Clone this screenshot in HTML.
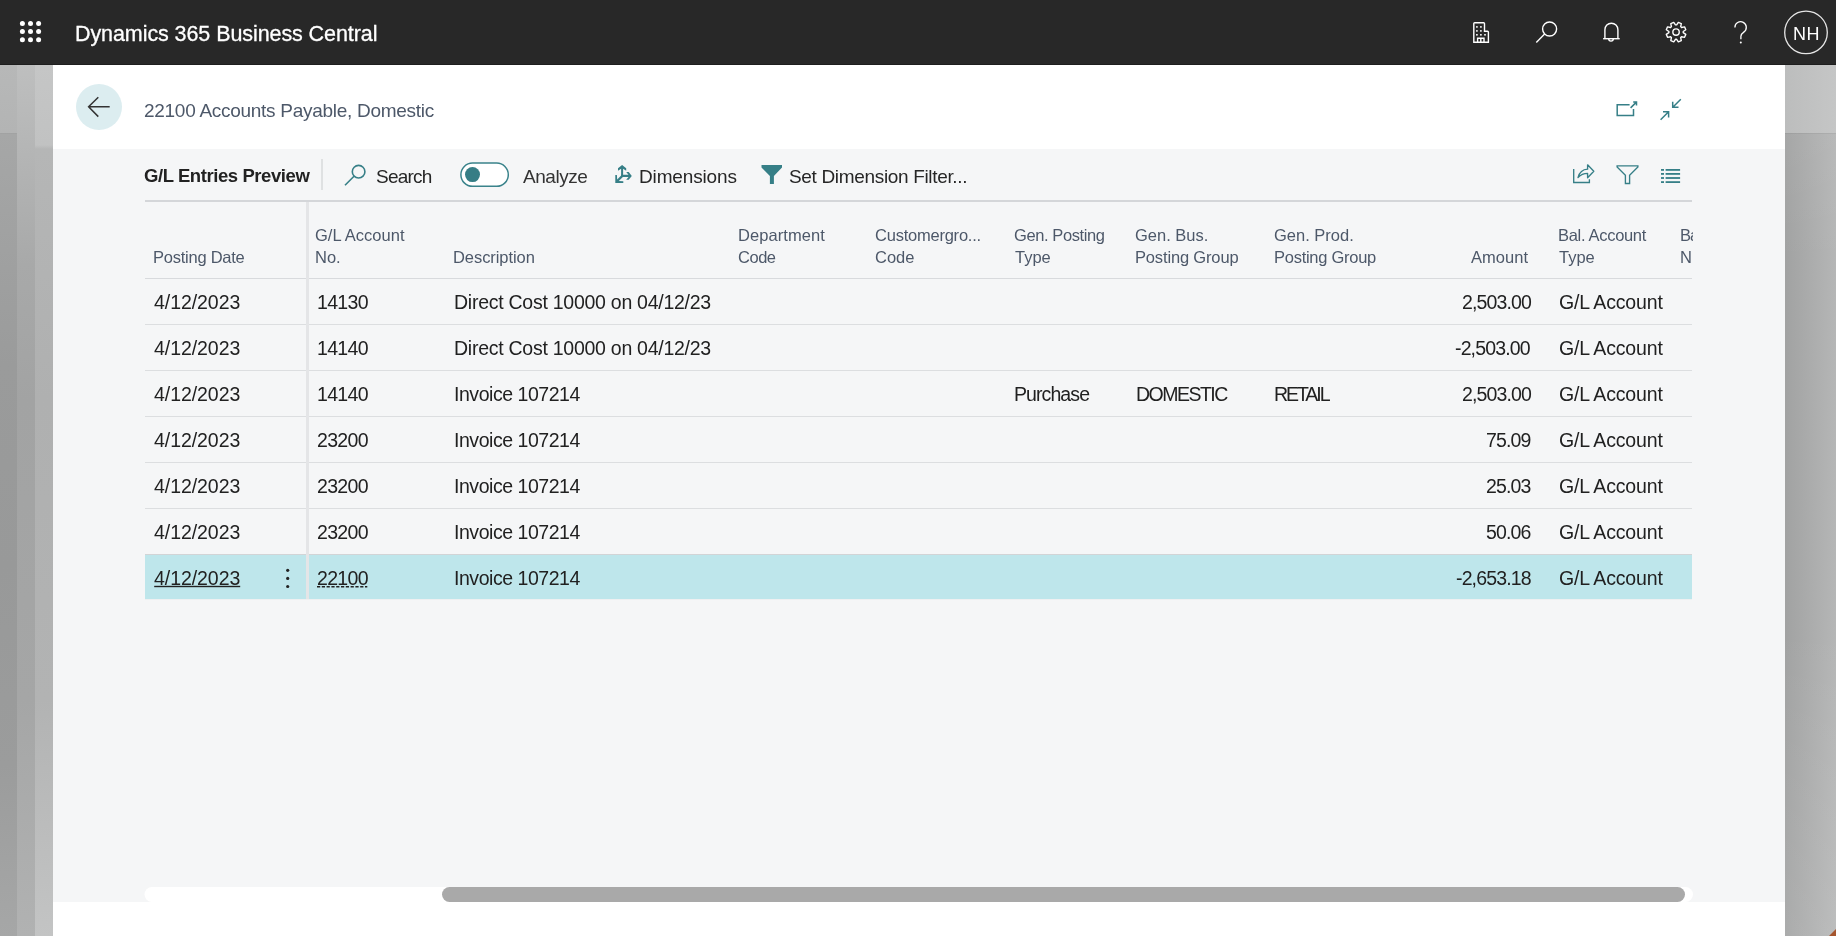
<!DOCTYPE html>
<html><head><meta charset="utf-8">
<style>
*{margin:0;padding:0;box-sizing:border-box}
html,body{width:1836px;height:936px;overflow:hidden}
body{position:relative;font-family:"Liberation Sans",sans-serif;background:#b5b6b6;-webkit-font-smoothing:antialiased}
.a{position:absolute;white-space:nowrap;line-height:1;will-change:transform}
.f{position:absolute}
#bgr{left:1785px;top:65px;width:51px;height:871px;background:linear-gradient(180deg,rgba(255,255,255,.08) 0px,rgba(255,255,255,.0) 200px,rgba(255,255,255,0) 560px,rgba(255,255,255,.1) 871px),linear-gradient(90deg,#a1a2a2 0%,#b5b6b6 100%)}
#s1{left:0;top:65px;width:17px;height:871px;background:linear-gradient(180deg,#b7b8b8 0px,#b3b4b4 68px,#a6a7a7 69px,#9a9b9b 300px,#989999 500px,#9b9c9c 700px,#a6a7a7 871px)}
#s2{left:17px;top:65px;width:18px;height:871px;background:linear-gradient(180deg,#bebfbf 0px,#b4b5b5 90px,#a8a9a9 200px,#a2a3a3 335px,#a5a6a6 635px,#b1b2b2 871px)}
#s3{left:35px;top:65px;width:18px;height:871px;background:linear-gradient(180deg,#c5c6c6 0px,#c1c2c2 80px,#b5b6b6 84px,#afb0b0 335px,#b2b3b3 635px,#c3c4c4 871px)}
#top{left:0;top:0;width:1836px;height:65px;background:#282828}
#panel{left:53px;top:65px;width:1732px;height:871px;background:#fff}
#gray{left:53px;top:149px;width:1732px;height:753px;background:#f5f6f7}
#clip{left:0;top:0;width:1693px;height:936px;overflow:hidden}
svg.ov{position:absolute;left:0;top:0}
</style></head>
<body>
<div class="f" id="bgr"></div>
<div class="f" style="left:1785px;top:65px;width:51px;height:68px;background:linear-gradient(90deg,#bcbdbd,#c5c6c6)"></div><div class="f" style="left:1785px;top:133px;width:51px;height:1px;background:rgba(0,0,0,.05)"></div>
<div class="f" id="s1"></div><div class="f" id="s2"></div><div class="f" id="s3"></div>
<div class="f" style="left:0;top:133px;width:17px;height:1px;background:rgba(0,0,0,.06)"></div>
<div class="f" id="top"></div>
<div class="f" style="left:0;top:64px;width:1836px;height:1px;background:#1e1e1e"></div>
<div class="f" id="panel"></div>
<div class="f" id="gray"></div>
<svg class="ov" width="1836" height="936" viewBox="0 0 1836 936">
 <!-- corner orange -->
 <path d="M1829,936 L1836,929 L1836,936 Z" fill="#a5552d"/>
 <!-- waffle -->
 <g fill="#fff">
  <circle cx="22.4" cy="23.6" r="2.5"/><circle cx="30.5" cy="23.6" r="2.5"/><circle cx="38.6" cy="23.6" r="2.5"/>
  <circle cx="22.4" cy="31.6" r="2.5"/><circle cx="30.5" cy="31.6" r="2.5"/><circle cx="38.6" cy="31.6" r="2.5"/>
  <circle cx="22.4" cy="39.7" r="2.5"/><circle cx="30.5" cy="39.7" r="2.5"/><circle cx="38.6" cy="39.7" r="2.5"/>
 </g>
 <!-- top icons -->
 <g fill="none" stroke="#fff" stroke-width="1.4">
  <path d="M1473.8,42.3 V23.6 a0.9,0.9 0 0 1 0.9,-0.9 H1483.6 a0.9,0.9 0 0 1 0.9,0.9 V31.3 H1487.5 a0.9,0.9 0 0 1 0.9,0.9 V42.3 Z"/>
  <path d="M1477.6,42.3 V38.3 H1484 V42.3 M1480.8,38.3 V42.3"/>
  <circle cx="1549.6" cy="29" r="7"/>
  <path d="M1536.3,42.4 L1544.6,34.1"/>
  <path d="M1604.9,38.5 V29.7 a6.5,6.5 0 0 1 13,0 V38.5"/>
  <path d="M1603.1,38.7 H1619.7"/>
  <path d="M1608.7,38.8 a2.3,2.3 0 0 0 4.6,0"/>
  <path d="M1676.64,24.92 L1678.36,22.37 L1681.30,23.59 L1680.70,26.61 L1681.54,27.45 L1684.56,26.85 L1685.78,29.79 L1683.23,31.51 L1683.23,32.69 L1685.78,34.41 L1684.56,37.35 L1681.54,36.75 L1680.70,37.59 L1681.30,40.61 L1678.36,41.83 L1676.64,39.28 L1675.46,39.28 L1673.74,41.83 L1670.80,40.61 L1671.40,37.59 L1670.56,36.75 L1667.54,37.35 L1666.32,34.41 L1668.87,32.69 L1668.87,31.51 L1666.32,29.79 L1667.54,26.85 L1670.56,27.45 L1671.40,26.61 L1670.80,23.59 L1673.74,22.37 L1675.46,24.92 Z" stroke-linejoin="round"/>
  <circle cx="1676.05" cy="32.1" r="3.2"/>
  <path d="M1734.9,27.4 a5.7,5.7 0 1 1 8.9,4.7 c-1.7,1.2 -2.9,2.3 -2.9,4.2 V39.2" stroke-width="1.3"/>
  <circle cx="1806" cy="32.4" r="21.3" stroke="#e6e6e6" stroke-width="1.3"/>
 </g>
 <g fill="#fff">
  <rect x="1476.1" y="26.1" width="1.6" height="1.6"/><rect x="1480.1" y="26.1" width="1.6" height="1.6"/>
  <rect x="1476.1" y="30.1" width="1.6" height="1.6"/><rect x="1480.1" y="30.1" width="1.6" height="1.6"/>
  <rect x="1476.1" y="34" width="1.6" height="1.6"/><rect x="1480.1" y="34" width="1.6" height="1.6"/><rect x="1484.2" y="34" width="1.6" height="1.6"/>
  <circle cx="1740.8" cy="42.5" r="1"/>
 </g>
 <!-- back button -->
 <circle cx="99" cy="107" r="23" fill="#dcedf0"/>
 <path d="M88.6,106.8 H109.7 M98.3,97.2 L88.6,106.8 L98.3,116.6" fill="none" stroke="#333" stroke-width="1.5"/>
 <!-- popout / collapse -->
 <g fill="none" stroke="#367f87" stroke-width="1.5">
  <path d="M1629.6,104.8 H1617.2 V115.6 H1633.5 V109.1"/>
  <path d="M1630.6,107.9 L1636.4,102.1 M1633.2,102 H1636.5 V105.4"/>
  <path d="M1680.8,99.3 L1672.8,107.3 M1672.7,101.8 V107.3 H1678.5"/>
  <path d="M1660.6,119.7 L1668.6,111.7 M1663,111.7 H1668.6 V117.4"/>
 </g>
 <!-- toolbar -->
 <rect x="321.5" y="159" width="1" height="31" fill="#c9cbce"/>
 <g fill="none" stroke="#367f87" stroke-width="1.6">
  <circle cx="358.6" cy="171.7" r="6.3"/>
  <path d="M345,185.3 L354,176.3"/>
 </g>
 <rect x="460.9" y="163.1" width="47.4" height="23.2" rx="11.6" fill="#fff" stroke="#3a838b" stroke-width="1.5"/>
 <circle cx="472.5" cy="174.6" r="7.5" fill="#367d85"/>
 <!-- dimensions icon -->
 <g fill="#367f87">
  <path d="M622.1,165 L626.2,168.2 V170.8 L623.1,168.7 V176.2 H621.1 V168.7 L618,170.8 V168.2 Z"/>
  <path d="M631.8,175.9 L628.7,179.8 H626.2 L628.5,177.1 H621.1 V174.8 H628.5 L626.2,172.1 H628.7 Z"/>
  <path d="M615.3,175 H616.9 L617.2,179.4 L621.4,175.2 L622.9,176.9 L618.8,181 L623.3,181.3 V182.9 H615.3 Z"/>
 </g>
 <path d="M761.5,165 H782 V167.5 L773.9,176 V184 H769.9 V176 L761.5,167.5 Z" fill="#367f87"/>
 <!-- right toolbar icons -->
 <g fill="none" stroke="#367f87" stroke-width="1.35">
  <path d="M1573.7,169 V182.5 H1589.4 V179.3"/>
  <path d="M1578,177.6 C1579.5,172 1583,169.4 1587.6,169.2 V164.8 L1593.8,171.2 L1587.6,177.8 V173.4 C1583.6,173.4 1580.6,174.8 1578,177.6 Z" stroke-linejoin="round"/>
  <path d="M1617.1,165.8 H1637.9 V167 L1629.6,175.4 V183.5 H1625.4 V175.4 L1617.1,167 Z" stroke-linejoin="miter"/>
 </g>
 <g fill="#367f87">
  <rect x="1661" y="169" width="3" height="1.8"/><rect x="1665.6" y="169" width="14.5" height="1.8"/>
  <rect x="1661" y="173" width="3" height="1.8"/><rect x="1665.6" y="173" width="14.5" height="1.8"/>
  <rect x="1661" y="177.1" width="3" height="1.8"/><rect x="1665.6" y="177.1" width="14.5" height="1.8"/>
  <rect x="1661" y="181.2" width="3" height="1.8"/><rect x="1665.6" y="181.2" width="14.5" height="1.8"/>
 </g>
 <!-- grid -->
 <rect x="145" y="200" width="1547" height="2" fill="#d4d6d9"/>
 <rect x="145" y="278" width="1547" height="1" fill="#d8dadd"/>
 <g fill="#dcdee0">
  <rect x="145" y="324" width="1547" height="1"/>
  <rect x="145" y="370" width="1547" height="1"/>
  <rect x="145" y="416" width="1547" height="1"/>
  <rect x="145" y="462" width="1547" height="1"/>
  <rect x="145" y="508" width="1547" height="1"/>
  <rect x="145" y="554" width="1547" height="1" fill="#d2d4d6"/>
 </g>
 <rect x="145" y="555" width="1547" height="44" fill="#bee6eb"/>
 <rect x="145" y="599" width="1547" height="1" fill="#eef0f1"/>
 <rect x="306" y="202" width="3" height="397" fill="#e4e5e7"/>
 <g fill="#222">
  <circle cx="287.7" cy="570.3" r="1.6"/><circle cx="287.7" cy="578.4" r="1.6"/><circle cx="287.7" cy="586.5" r="1.6"/>
  <rect x="154.2" y="585.8" width="86" height="1.4"/>
 </g>
 <path d="M317,586.8 H367.3" stroke="#222" stroke-width="1.5" stroke-dasharray="3.2,1.6"/>
 <!-- scrollbar -->
 <rect x="144.5" y="887" width="1548.5" height="15" rx="7.5" fill="#fff"/>
 <rect x="442" y="887" width="1243" height="15" rx="7.5" fill="#a9a9a9"/>
</svg>
<span class="a" id="t_title" style="top:23.90px;font-size:21.5px;color:#ffffff;letter-spacing:-0.082px;left:75.00px;-webkit-text-stroke:0.3px #fff;">Dynamics 365 Business Central</span>
<span class="a" id="t_nh" style="top:24.76px;font-size:18px;color:#ffffff;letter-spacing:0.400px;left:1793.00px;">NH</span>
<span class="a" id="t_head" style="top:100.92px;font-size:19px;color:#4d5869;letter-spacing:-0.281px;left:144.00px;">22100 Accounts Payable, Domestic</span>
<span class="a" id="t_glp" style="top:167.04px;font-size:18.5px;color:#222222;font-weight:700;letter-spacing:-0.422px;left:144.00px;">G/L Entries Preview</span>
<span class="a" id="t_search" style="top:166.72px;font-size:19px;color:#262626;letter-spacing:-0.780px;left:376.00px;">Search</span>
<span class="a" id="t_analyze" style="top:166.72px;font-size:19px;color:#333333;letter-spacing:-0.450px;left:523.00px;">Analyze</span>
<span class="a" id="t_dims" style="top:166.72px;font-size:19px;color:#262626;letter-spacing:-0.144px;left:639.00px;">Dimensions</span>
<span class="a" id="t_sdf" style="top:166.72px;font-size:19px;color:#262626;letter-spacing:-0.332px;left:789.00px;">Set Dimension Filter...</span>
<span class="a" id="h_pd" style="top:249.03px;font-size:16.5px;color:#4d5869;letter-spacing:-0.245px;left:153.00px;">Posting Date</span>
<span class="a" id="h_gl1" style="top:227.23px;font-size:16.5px;color:#4d5869;letter-spacing:0.020px;left:315.00px;">G/L Account</span>
<span class="a" id="h_gl2" style="top:249.03px;font-size:16.5px;color:#4d5869;left:315.00px;">No.</span>
<span class="a" id="h_desc" style="top:249.03px;font-size:16.5px;color:#4d5869;letter-spacing:-0.070px;left:453.00px;">Description</span>
<span class="a" id="h_dep1" style="top:227.23px;font-size:16.5px;color:#4d5869;letter-spacing:0.067px;left:738.00px;">Department</span>
<span class="a" id="h_dep2" style="top:249.03px;font-size:16.5px;color:#4d5869;letter-spacing:-0.467px;left:738.00px;">Code</span>
<span class="a" id="h_cg1" style="top:227.23px;font-size:16.5px;color:#4d5869;letter-spacing:-0.231px;left:875.00px;">Customergro...</span>
<span class="a" id="h_cg2" style="top:249.03px;font-size:16.5px;color:#4d5869;left:875.00px;">Code</span>
<span class="a" id="h_gp1" style="top:227.23px;font-size:16.5px;color:#4d5869;letter-spacing:-0.409px;left:1014.00px;">Gen. Posting</span>
<span class="a" id="h_gp2" style="top:249.03px;font-size:16.5px;color:#4d5869;left:1015.00px;">Type</span>
<span class="a" id="h_gb1" style="top:227.23px;font-size:16.5px;color:#4d5869;left:1135.00px;">Gen. Bus.</span>
<span class="a" id="h_gb2" style="top:249.03px;font-size:16.5px;color:#4d5869;letter-spacing:-0.158px;left:1135.00px;">Posting Group</span>
<span class="a" id="h_gpr1" style="top:227.23px;font-size:16.5px;color:#4d5869;left:1274.00px;">Gen. Prod.</span>
<span class="a" id="h_gpr2" style="top:249.03px;font-size:16.5px;color:#4d5869;letter-spacing:-0.267px;left:1274.00px;">Posting Group</span>
<span class="a" id="h_amt" style="top:249.03px;font-size:16.5px;color:#4d5869;letter-spacing:0.020px;left:1471.00px;">Amount</span>
<span class="a" id="h_ba1" style="top:227.23px;font-size:16.5px;color:#4d5869;letter-spacing:-0.309px;left:1558.00px;">Bal. Account</span>
<span class="a" id="h_ba2" style="top:249.03px;font-size:16.5px;color:#4d5869;left:1559.00px;">Type</span>
<span class="a" id="d0_date" style="top:293.49px;font-size:19.5px;color:#212121;letter-spacing:-0.062px;left:154.00px;">4/12/2023</span>
<span class="a" id="d0_acct" style="top:293.49px;font-size:19.5px;color:#212121;letter-spacing:-0.675px;left:317.00px;">14130</span>
<span class="a" id="d0_desc" style="top:293.49px;font-size:19.5px;color:#212121;letter-spacing:-0.261px;left:454.00px;">Direct Cost 10000 on 04/12/23</span>
<span class="a" id="d0_amt" style="top:293.49px;font-size:19.5px;color:#212121;letter-spacing:-0.857px;right:305.00px;">2,503.00</span>
<span class="a" id="d0_bat" style="top:293.49px;font-size:19.5px;color:#212121;letter-spacing:-0.170px;left:1559.00px;">G/L Account</span>
<span class="a" id="d1_date" style="top:339.49px;font-size:19.5px;color:#212121;letter-spacing:-0.062px;left:154.00px;">4/12/2023</span>
<span class="a" id="d1_acct" style="top:339.49px;font-size:19.5px;color:#212121;letter-spacing:-0.675px;left:317.00px;">14140</span>
<span class="a" id="d1_desc" style="top:339.49px;font-size:19.5px;color:#212121;letter-spacing:-0.261px;left:454.00px;">Direct Cost 10000 on 04/12/23</span>
<span class="a" id="d1_amt" style="top:339.49px;font-size:19.5px;color:#212121;letter-spacing:-0.857px;right:306.00px;">-2,503.00</span>
<span class="a" id="d1_bat" style="top:339.49px;font-size:19.5px;color:#212121;letter-spacing:-0.170px;left:1559.00px;">G/L Account</span>
<span class="a" id="d2_date" style="top:385.49px;font-size:19.5px;color:#212121;letter-spacing:-0.062px;left:154.00px;">4/12/2023</span>
<span class="a" id="d2_acct" style="top:385.49px;font-size:19.5px;color:#212121;letter-spacing:-0.675px;left:317.00px;">14140</span>
<span class="a" id="d2_desc" style="top:385.49px;font-size:19.5px;color:#212121;letter-spacing:-0.462px;left:454.00px;">Invoice 107214</span>
<span class="a" id="d2_gp" style="top:385.49px;font-size:19.5px;color:#212121;letter-spacing:-0.914px;left:1014.00px;">Purchase</span>
<span class="a" id="d2_gb" style="top:385.49px;font-size:19.5px;color:#212121;letter-spacing:-1.514px;left:1136.00px;">DOMESTIC</span>
<span class="a" id="d2_gpr" style="top:385.49px;font-size:19.5px;color:#212121;letter-spacing:-2.060px;left:1274.00px;">RETAIL</span>
<span class="a" id="d2_amt" style="top:385.49px;font-size:19.5px;color:#212121;letter-spacing:-0.857px;right:305.00px;">2,503.00</span>
<span class="a" id="d2_bat" style="top:385.49px;font-size:19.5px;color:#212121;letter-spacing:-0.170px;left:1559.00px;">G/L Account</span>
<span class="a" id="d3_date" style="top:431.49px;font-size:19.5px;color:#212121;letter-spacing:-0.062px;left:154.00px;">4/12/2023</span>
<span class="a" id="d3_acct" style="top:431.49px;font-size:19.5px;color:#212121;letter-spacing:-0.675px;left:317.00px;">23200</span>
<span class="a" id="d3_desc" style="top:431.49px;font-size:19.5px;color:#212121;letter-spacing:-0.462px;left:454.00px;">Invoice 107214</span>
<span class="a" id="d3_amt" style="top:431.49px;font-size:19.5px;color:#212121;letter-spacing:-0.857px;right:305.00px;">75.09</span>
<span class="a" id="d3_bat" style="top:431.49px;font-size:19.5px;color:#212121;letter-spacing:-0.170px;left:1559.00px;">G/L Account</span>
<span class="a" id="d4_date" style="top:477.49px;font-size:19.5px;color:#212121;letter-spacing:-0.062px;left:154.00px;">4/12/2023</span>
<span class="a" id="d4_acct" style="top:477.49px;font-size:19.5px;color:#212121;letter-spacing:-0.675px;left:317.00px;">23200</span>
<span class="a" id="d4_desc" style="top:477.49px;font-size:19.5px;color:#212121;letter-spacing:-0.462px;left:454.00px;">Invoice 107214</span>
<span class="a" id="d4_amt" style="top:477.49px;font-size:19.5px;color:#212121;letter-spacing:-0.857px;right:305.00px;">25.03</span>
<span class="a" id="d4_bat" style="top:477.49px;font-size:19.5px;color:#212121;letter-spacing:-0.170px;left:1559.00px;">G/L Account</span>
<span class="a" id="d5_date" style="top:523.49px;font-size:19.5px;color:#212121;letter-spacing:-0.062px;left:154.00px;">4/12/2023</span>
<span class="a" id="d5_acct" style="top:523.49px;font-size:19.5px;color:#212121;letter-spacing:-0.675px;left:317.00px;">23200</span>
<span class="a" id="d5_desc" style="top:523.49px;font-size:19.5px;color:#212121;letter-spacing:-0.462px;left:454.00px;">Invoice 107214</span>
<span class="a" id="d5_amt" style="top:523.49px;font-size:19.5px;color:#212121;letter-spacing:-0.857px;right:305.00px;">50.06</span>
<span class="a" id="d5_bat" style="top:523.49px;font-size:19.5px;color:#212121;letter-spacing:-0.170px;left:1559.00px;">G/L Account</span>
<span class="a" id="d6_date" style="top:569.49px;font-size:19.5px;color:#212121;letter-spacing:-0.062px;left:154.00px;">4/12/2023</span>
<span class="a" id="d6_acct" style="top:569.49px;font-size:19.5px;color:#212121;letter-spacing:-0.675px;left:317.00px;">22100</span>
<span class="a" id="d6_desc" style="top:569.49px;font-size:19.5px;color:#212121;letter-spacing:-0.462px;left:454.00px;">Invoice 107214</span>
<span class="a" id="d6_amt" style="top:569.49px;font-size:19.5px;color:#212121;letter-spacing:-0.857px;right:305.00px;">-2,653.18</span>
<span class="a" id="d6_bat" style="top:569.49px;font-size:19.5px;color:#212121;letter-spacing:-0.170px;left:1559.00px;">G/L Account</span>
<div class="f" id="clip"><span class="a" id="h_bn1" style="top:227.23px;font-size:16.5px;color:#4d5869;left:1680.20px;letter-spacing:-0.9px;">Bal. Account</span>
<span class="a" id="h_bn2" style="top:249.03px;font-size:16.5px;color:#4d5869;left:1680.20px;">N</span></div>
</body></html>
